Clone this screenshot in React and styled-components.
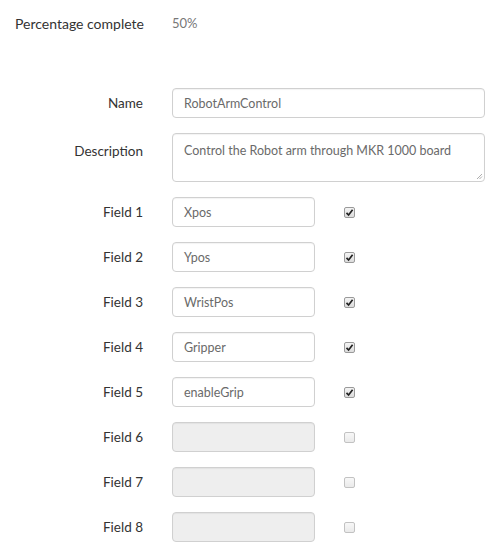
import React from "react";
import styled, { createGlobalStyle } from "styled-components";

const Global = createGlobalStyle`
  html, body { margin: 0; padding: 0; background: #fff; }
  body { font-family: Lato, "Open Sans", sans-serif; color: #333; }
  * { box-sizing: border-box; }
`;

const Page = styled.div`
  width: 497px;
  height: 555px;
  overflow: hidden;
  padding: 14px 0 0 0;
`;

const StatusRow = styled.div`
  display: flex;
  align-items: center;
  height: 18px;
`;

const StatusLabel = styled.div`
  width: 172px;
  padding-left: 15px;
  font-size: 14px;
  color: #333;
`;

const StatusValue = styled.div`
  font-size: 13px;
  color: #777;
`;

const Form = styled.div`
  margin-top: 56px;
  display: flex;
  flex-direction: column;
  gap: 15px;
`;

const Row = styled.div`
  display: flex;
  align-items: ${(p) => (p.$top ? "flex-start" : "center")};
  gap: 29px;
`;

const Label = styled.label`
  width: 143px;
  text-align: right;
  font-size: 13.5px;
  color: #333;
  padding-top: ${(p) => (p.$top ? "10px" : "0")};
`;

const Input = styled.div`
  width: ${(p) => (p.$wide ? "313px" : "143px")};
  height: 30px;
  border: 1px solid #d0d0d0;
  border-radius: 4px;
  background: ${(p) => (p.$disabled ? "#eeeeee" : "#fff")};
  box-shadow: inset 0 1px 1px rgba(0, 0, 0, 0.05);
  padding: 0 11px;
  display: flex;
  align-items: center;
  font-size: 12.5px;
  color: #6a6a6a;
  white-space: nowrap;
`;

const TextArea = styled.div`
  position: relative;
  width: 313px;
  height: 49px;
  border: 1px solid #d0d0d0;
  border-radius: 4px;
  background: #fff;
  box-shadow: inset 0 1px 1px rgba(0, 0, 0, 0.05);
  padding: 9px 11px;
  font-size: 12.5px;
  color: #6a6a6a;
`;

const Grip = styled.svg`
  position: absolute;
  right: 1px;
  bottom: 1px;
`;

const Check = styled.span`
  width: 11px;
  height: 11px;
  border: 1px solid #9a9a9a;
  border-radius: 2px;
  background: linear-gradient(#f4f4f4, #dcdcdc);
  display: flex;
  align-items: center;
  justify-content: center;
  opacity: ${(p) => (p.$checked ? 1 : 0.6)};
`;

const fields = [
  ["Field 1", "Xpos"],
  ["Field 2", "Ypos"],
  ["Field 3", "WristPos"],
  ["Field 4", "Gripper"],
  ["Field 5", "enableGrip"],
  ["Field 6", null],
  ["Field 7", null],
  ["Field 8", null],
];

export default function App() {
  return (
    <Page>
      <Global />
      <StatusRow>
        <StatusLabel>Percentage complete</StatusLabel>
        <StatusValue>50%</StatusValue>
      </StatusRow>
      <Form>
        <Row>
          <Label>Name</Label>
          <Input $wide>RobotArmControl</Input>
        </Row>
        <Row $top>
          <Label $top>Description</Label>
          <TextArea>
            Control the Robot arm through MKR 1000 board
            <Grip width="8" height="8" viewBox="0 0 8 8">
              <path d="M7 2 L2 7 M7 4.5 L4.5 7" stroke="#999" strokeWidth="0.8" />
            </Grip>
          </TextArea>
        </Row>
        {fields.map(([label, value]) => (
          <Row key={label}>
            <Label>{label}</Label>
            <Input $disabled={value === null}>{value}</Input>
            <Check $checked={value !== null}>
              {value !== null && (
                <svg width="9" height="9" viewBox="0 0 9 9">
                  <path
                    d="M1.5 4.8 L3.6 7 L7.6 1.8"
                    stroke="#222"
                    strokeWidth="1.7"
                    fill="none"
                  />
                </svg>
              )}
            </Check>
          </Row>
        ))}
      </Form>
    </Page>
  );
}
